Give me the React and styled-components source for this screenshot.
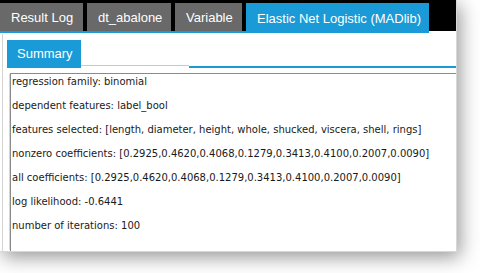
import React from "react";
import styled, { createGlobalStyle } from "styled-components";

const lines = [
  "regression family: binomial",
  "dependent features: label_bool",
  "features selected: [length, diameter, height, whole, shucked, viscera, shell, rings]",
  "nonzero coefficients: [0.2925,0.4620,0.4068,0.1279,0.3413,0.4100,0.2007,0.0090]",
  "all coefficients: [0.2925,0.4620,0.4068,0.1279,0.3413,0.4100,0.2007,0.0090]",
  "log likelihood: -0.6441",
  "number of iterations: 100",
];

const tabs = [
  { name: "Result Log", width: 83 },
  { name: "dt_abalone", width: 84 },
  { name: "Variable", width: 67 },
  { name: "Elastic Net Logistic (MADlib)", width: 183, active: true },
];

const GlobalStyle = createGlobalStyle`
  html, body {
    margin: 0;
    padding: 0;
    background: #ffffff;
    overflow: hidden;
  }
`;

function App() {
  return (
    <>
      <GlobalStyle />
      <Page>
        <Window>
          <Header>
            <TabList>
              {tabs.map((tab) => (
                <Tab key={tab.name} $active={tab.active} style={{ width: tab.width }}>
                  {tab.name}
                </Tab>
              ))}
            </TabList>
            <Filler />
          </Header>

          <Panel>
            <SubTabRow>
              <SubTab>Summary</SubTab>
              <SubGap />
              <SubRule />
            </SubTabRow>
            <Output>
              {lines.map((line) => (
                <Line key={line}>{line}</Line>
              ))}
            </Output>
          </Panel>
        </Window>
      </Page>
    </>
  );
}

const Page = styled.div`
  width: 480px;
  height: 273px;
  background: #ffffff;
`;

const Window = styled.div`
  width: 457px;
  height: 252px;
  background: #ffffff;
  overflow: hidden;
  display: flex;
  flex-direction: column;
  box-shadow: 3px 5px 18px rgba(0, 0, 0, 0.42);
  border-right: 1px solid #d8d8d8;
  border-bottom: 1px solid #d8d8d8;
  box-sizing: border-box;
`;

const Header = styled.div`
  display: flex;
  align-items: flex-start;
  flex-shrink: 0;
`;

const TabList = styled.div`
  display: flex;
  gap: 4px;
  padding-top: 3px;
  background: #000000;
  border-bottom: 2px solid #1a9ad6;
`;

const Tab = styled.div`
  height: 28px;
  box-sizing: border-box;
  padding: 0 8px 0 11px;
  display: flex;
  align-items: center;
  font-family: "Liberation Sans", Arial, sans-serif;
  font-size: 13px;
  color: #ffffff;
  white-space: nowrap;
  background: ${(p) => (p.$active ? "#1a9ad6" : "#696969")};
  margin-bottom: ${(p) => (p.$active ? "-2px" : "0")};
  height: ${(p) => (p.$active ? "30px" : "28px")};
`;

const Filler = styled.div`
  flex: 1;
  height: 31px;
  background: #000000;
`;

const Panel = styled.div`
  flex: 1;
  margin-top: 1px;
  margin-left: 2px;
  border-left: 1px solid #d4d4d4;
  padding: 4px 0 0 4px;
  display: flex;
  flex-direction: column;
`;

const SubTabRow = styled.div`
  display: flex;
  align-items: flex-end;
  height: 30px;
  flex-shrink: 0;
`;

const SubTab = styled.div`
  height: 28px;
  box-sizing: border-box;
  padding: 0 8px 2px 10px;
  display: flex;
  align-items: center;
  background: #1a9ad6;
  color: #ffffff;
  font-family: "Liberation Sans", Arial, sans-serif;
  font-size: 13px;
`;

const SubGap = styled.div`
  width: 108px;
  align-self: flex-end;
  margin-bottom: 2px;
  border-bottom: 1px solid #c4ccd2;
`;

const SubRule = styled.div`
  flex: 1;
  height: 2px;
  background: #1a9ad6;
`;

const Output = styled.div`
  flex: 1;
  margin: 5px 0 0 3px;
  padding: 2px 0 0 1px;
  border-left: 1px solid #8a8a8a;
  border-top: 1px solid #8a8a8a;
  box-shadow: -2px 0 0 -1px #d6d6d6;
  font-family: "DejaVu Sans", Verdana, sans-serif;
  font-size: 10px;
  line-height: 12px;
  color: #1a1a1a;
`;

const Line = styled.p`
  margin: 0 0 12px;
  white-space: nowrap;
`;

export default App;
